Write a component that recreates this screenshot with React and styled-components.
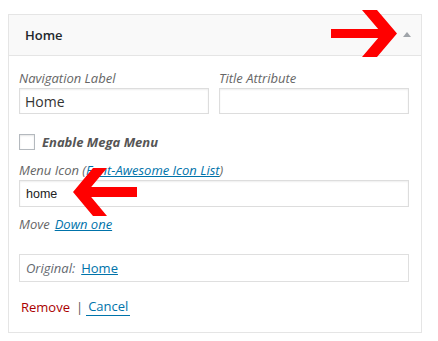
import React from 'react';
import styled, { createGlobalStyle } from 'styled-components';

const Global = createGlobalStyle`
  body {
    margin: 0;
    background: #fff;
    font-family: "Open Sans", "Liberation Sans", sans-serif;
    color: #444;
  }
`;

const Page = styled.div`
  position: relative;
  width: 438px;
  height: 341px;
  padding: 14px 0 0 8px;
  box-sizing: border-box;
`;

const Panel = styled.div`
  width: 414px;
  border: 1px solid #e5e5e5;
  box-sizing: border-box;
  background: #fff;
`;

const Header = styled.div`
  height: 40px;
  display: flex;
  align-items: center;
  justify-content: space-between;
  padding: 0 10px 0 16px;
  background: #f9f9f9;
  border-bottom: 1px solid #e5e5e5;
`;

const Title = styled.span`
  font-size: 13px;
  font-weight: 600;
  color: #23282d;
`;

const Toggle = styled.span`
  width: 0;
  height: 0;
  border-left: 4px solid transparent;
  border-right: 4px solid transparent;
  border-bottom: 5px solid #a0a5aa;
  margin-top: -1px;
`;

const Body = styled.div`
  padding: 13px 12px 16px 10px;
  display: flex;
  flex-direction: column;
`;

const Row = styled.div`
  display: flex;
  gap: 10px;
`;

const Field = styled.label`
  display: flex;
  flex-direction: column;
  flex: 1;
  margin-top: ${p => p.$top || 0}px;
`;

const Label = styled.span`
  font-size: 13px;
  line-height: 18px;
  font-style: italic;
  color: #666;
  margin-bottom: 1px;
`;

const Input = styled.div`
  height: ${p => p.$h || 26}px;
  box-sizing: border-box;
  border: 1px solid #ddd;
  box-shadow: inset 0 1px 2px rgba(0, 0, 0, 0.07);
  display: flex;
  align-items: center;
  padding: 0 5px;
  font-size: 14px;
  color: #333;
  ${p => p.$plain && `
    font-family: "Liberation Sans", Arial, sans-serif;
    font-size: 12.5px;
    color: #222;
    padding: 0 6px;
  `}
`;

const Check = styled.div`
  display: flex;
  align-items: center;
  gap: 7px;
  margin-top: 20px;
  height: 16px;
`;

const Box = styled.span`
  width: 16px;
  height: 16px;
  box-sizing: border-box;
  border: 1px solid #b4b9be;
  box-shadow: inset 0 1px 2px rgba(0, 0, 0, 0.1);
`;

const CheckText = styled.span`
  font-size: 13px;
  font-weight: 700;
  font-style: italic;
  color: #555;
`;

const Link = styled.a`
  color: #0073aa;
  text-decoration: underline;
  cursor: pointer;
`;

const Move = styled.div`
  margin-top: 8px;
  font-size: 13px;
  line-height: 18px;
  font-style: italic;
  color: #666;
  display: flex;
  gap: 5px;
`;

const Original = styled.div`
  margin-top: 21px;
  height: 28px;
  box-sizing: border-box;
  border: 1px solid #dfdfdf;
  display: flex;
  align-items: center;
  gap: 6px;
  padding: 0 6px;
  font-size: 13px;
`;

const Muted = styled.span`
  font-style: italic;
  color: #646970;
`;

const Actions = styled.div`
  margin-top: 16px;
  display: flex;
  align-items: center;
  font-size: 13px;
  line-height: 18px;
  padding-left: 2px;
`;

const Remove = styled.a`
  color: #a00;
`;

const Sep = styled.span`
  color: #555;
  margin: 0 3px 0 6px;
`;

const Cancel = styled.a`
  color: #0073aa;
  padding: 0 2px;
  border-bottom: 1px solid #0073aa;
  line-height: 17px;
`;

const Annot = styled.svg`
  position: absolute;
  left: 0;
  top: 0;
  pointer-events: none;
`;

export default function App() {
  return (
    <Page>
      <Global />
      <Panel>
        <Header>
          <Title>Home</Title>
          <Toggle />
        </Header>
        <Body>
          <Row>
            <Field>
              <Label>Navigation Label</Label>
              <Input>Home</Input>
            </Field>
            <Field>
              <Label>Title Attribute</Label>
              <Input />
            </Field>
          </Row>
          <Check>
            <Box />
            <CheckText>Enable Mega Menu</CheckText>
          </Check>
          <Field $top={11}>
            <Label>
              Menu Icon (<Link>Font-Awesome Icon List</Link>)
            </Label>
            <Input $h={27} $plain>home</Input>
          </Field>
          <Move>
            Move <Link>Down one</Link>
          </Move>
          <Original>
            <Muted>Original:</Muted>
            <Link>Home</Link>
          </Original>
          <Actions>
            <Remove>Remove</Remove>
            <Sep>|</Sep>
            <Cancel>Cancel</Cancel>
          </Actions>
        </Body>
      </Panel>
      <Annot width="438" height="341" viewBox="0 0 438 341">
        <rect x="331" y="29" width="55" height="9" fill="#f00" />
        <polygon points="362,10 377,10 397,33.5 377,57 362,57 382,33.5" fill="#f00" />
        <rect x="84" y="187" width="53" height="10" fill="#f00" />
        <polygon points="107,168 93,168 73,192 93,216 107,216 87,192" fill="#f00" />
      </Annot>
    </Page>
  );
}
